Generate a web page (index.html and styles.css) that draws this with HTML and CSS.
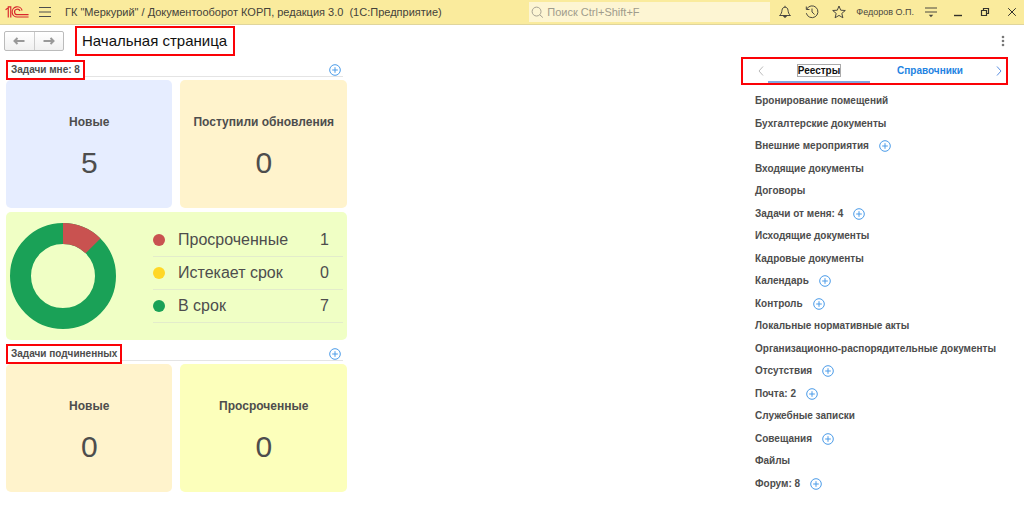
FILE: index.html
```html
<!DOCTYPE html>
<html lang="ru">
<head>
<meta charset="utf-8">
<meta name="viewport" content="width=device-width, initial-scale=1">
<title>Начальная страница</title>
<link rel="stylesheet" href="styles.css">
</head>
<body>
<svg class="defs" aria-hidden="true">
  <symbol id="plus" viewBox="0 0 12 12"><circle cx="6" cy="6" r="5.3"/><path d="M6 3.2v5.6M3.2 6h5.6"/></symbol>
</svg>
<header class="titlebar">
  <svg class="logo" viewBox="0 0 26 14" aria-label="1С">
    <g fill="none" stroke="#d8262c" stroke-width="1.2">
      <path d="M.6 4.600L3.400 2.600V12.600M3.400 4.200V1.600H6V12.600"/>
      <path d="M17.800 5.400A5.300 5.300 0 1 0 13 12.200H24.500"/>
      <path d="M15.600 6A2.900 2.900 0 1 0 13 9.800H24.500"/>
    </g>
  </svg>
  <button class="icon-btn menu" aria-label="Меню"><svg viewBox="0 0 12 12"><path d="M0 1.500h12M0 6h12M0 10.500h12"/></svg></button>
  <div class="app-title">ГК "Меркурий" / Документооборот КОРП, редакция 3.0&nbsp; (1С:Предприятие)</div>
  <label class="search">
    <svg viewBox="0 0 14 14"><circle cx="6" cy="6" r="4.8"/><path d="M9.500 9.500l3.300 3"/></svg>
    <input type="search" placeholder="Поиск Ctrl+Shift+F" aria-label="Поиск">
  </label>
  <div class="tools">
    <button class="icon-btn" aria-label="Уведомления"><svg viewBox="0 0 14 14"><path d="M1.500 10.500h11C10.600 9 10.300 7.400 10 5.200 9.800 3.300 8.700 2.200 7 2.200S4.200 3.300 4 5.200C3.700 7.400 3.400 9 1.500 10.500zM7 2.200V.8"/><path d="M5.600 11.500a1.500 1.200 0 0 0 2.800 0z" fill="currentColor"/></svg></button>
    <button class="icon-btn" aria-label="История"><svg viewBox="0 0 14 14"><path d="M1.800 4A5.900 5.900 0 1 1 1.300 8.200M1.300 1.500v3h3.200M7 3.500V7l2.600 2.500"/></svg></button>
    <button class="icon-btn" aria-label="Избранное"><svg viewBox="0 0 14 14"><path d="M7 1l1.700 4.200 4.600.3-3.500 2.900 1.100 4.400L7 10.400l-3.900 2.400 1.100-4.400L.7 5.500l4.600-.3z"/></svg></button>
    <button class="user">Федоров О.П.</button>
    <button class="icon-btn" aria-label="Настройки"><svg viewBox="0 0 14 14"><path d="M1 3h12M1 7h12"/><path d="M4.800 9.800h4.400L7 12.300z" fill="currentColor" stroke="none"/></svg></button>
    <button class="icon-btn win" aria-label="Свернуть"><svg viewBox="0 0 14 14"><path d="M3 10.500h8" stroke-width="1.400"/></svg></button>
    <button class="icon-btn win" aria-label="Развернуть"><svg viewBox="0 0 14 14"><path d="M3.500 5.500h5v5h-5zM5.500 5.500v-2h5v5h-2" stroke-width="1.200"/></svg></button>
    <button class="icon-btn win" aria-label="Закрыть"><svg viewBox="0 0 14 14"><path d="M3.200 3.200l7.600 7.600M10.800 3.200l-7.600 7.600"/></svg></button>
  </div>
</header>
<div class="pagebar">
  <div class="nav">
    <button aria-label="Назад"><svg viewBox="0 0 12 8"><path d="M11.500 4H1.500M4.500 1L1.500 4l3 3"/></svg></button>
    <button aria-label="Вперед"><svg viewBox="0 0 12 8"><path d="M.5 4h10M7.500 1l3 3-3 3"/></svg></button>
  </div>
  <h1 class="marked">Начальная страница</h1>
  <button class="more" aria-label="Ещё"><svg viewBox="0 0 4 12"><circle cx="2" cy="2" r="1.300"/><circle cx="2" cy="6" r="1.300"/><circle cx="2" cy="10" r="1.300"/></svg></button>
</div>
<div class="content">
  <main class="tasks">
    <section>
      <div class="section-head">
        <h2 class="marked">Задачи мне: 8</h2>
        <button class="add" aria-label="Добавить задачу"><svg><use href="#plus"/></svg></button>
      </div>
      <div class="cards">
        <article class="card blue"><h3>Новые</h3><p>5</p></article>
        <article class="card sand"><h3>Поступили обновления</h3><p>0</p></article>
      </div>
      <div class="summary">
        <svg class="donut" viewBox="0 0 106 106" aria-hidden="true">
          <circle cx="53" cy="53" r="42.500" stroke="#1aa157"/>
          <circle cx="53" cy="53" r="42.500" stroke="#c95250" pathLength="8" stroke-dasharray="1 7" transform="rotate(-90 53 53)"/>
        </svg>
        <ul class="legend">
          <li><span class="dot red"></span><span>Просроченные</span><b>1</b></li>
          <li><span class="dot yellow"></span><span>Истекает срок</span><b>0</b></li>
          <li><span class="dot green"></span><span>В срок</span><b>7</b></li>
        </ul>
      </div>
    </section>
    <section>
      <div class="section-head">
        <h2 class="marked">Задачи подчиненных</h2>
        <button class="add" aria-label="Добавить задачу"><svg><use href="#plus"/></svg></button>
      </div>
      <div class="cards">
        <article class="card sand"><h3>Новые</h3><p>0</p></article>
        <article class="card lemon"><h3>Просроченные</h3><p>0</p></article>
      </div>
    </section>
  </main>
  <aside class="registry">
    <div class="tabs marked" role="tablist">
      <button class="arrow prev" aria-label="Назад"><svg viewBox="0 0 6 10"><path d="M5 .5L1 5l4 4.500"/></svg></button>
      <button class="tab active" role="tab" aria-selected="true"><span>Реестры</span></button>
      <button class="tab" role="tab" aria-selected="false"><span>Справочники</span></button>
      <button class="arrow next" aria-label="Далее"><svg viewBox="0 0 6 10"><path d="M1 .5L5 5 1 9.500"/></svg></button>
    </div>
    <ul class="links">
      <li><a href="#">Бронирование помещений</a></li>
      <li><a href="#">Бухгалтерские документы</a></li>
      <li><a href="#">Внешние мероприятия</a><button class="add" aria-label="Добавить"><svg><use href="#plus"/></svg></button></li>
      <li><a href="#">Входящие документы</a></li>
      <li><a href="#">Договоры</a></li>
      <li><a href="#">Задачи от меня: 4</a><button class="add" aria-label="Добавить"><svg><use href="#plus"/></svg></button></li>
      <li><a href="#">Исходящие документы</a></li>
      <li><a href="#">Кадровые документы</a></li>
      <li><a href="#">Календарь</a><button class="add" aria-label="Добавить"><svg><use href="#plus"/></svg></button></li>
      <li><a href="#">Контроль</a><button class="add" aria-label="Добавить"><svg><use href="#plus"/></svg></button></li>
      <li><a href="#">Локальные нормативные акты</a></li>
      <li><a href="#">Организационно-распорядительные документы</a></li>
      <li><a href="#">Отсутствия</a><button class="add" aria-label="Добавить"><svg><use href="#plus"/></svg></button></li>
      <li><a href="#">Почта: 2</a><button class="add" aria-label="Добавить"><svg><use href="#plus"/></svg></button></li>
      <li><a href="#">Служебные записки</a></li>
      <li><a href="#">Совещания</a><button class="add" aria-label="Добавить"><svg><use href="#plus"/></svg></button></li>
      <li><a href="#">Файлы</a></li>
      <li><a href="#">Форум: 8</a><button class="add" aria-label="Добавить"><svg><use href="#plus"/></svg></button></li>
    </ul>
  </aside>
</div>
</body>
</html>
```
FILE: styles.css
```css
* { box-sizing: border-box; }
body { margin: 0; background: #fff; color: #4d4d4d; font: 10px/12px "Liberation Sans", Arial, sans-serif; }
h1, h2, h3, p, ul { margin: 0; padding: 0; }
ul { list-style: none; }
button { padding: 0; border: 0; background: none; color: inherit; font: inherit; cursor: pointer; }
svg { display: block; fill: none; stroke: currentColor; }
.defs { position: absolute; width: 0; height: 0; }
.marked { border: 2px solid #fb0207; }

.titlebar { display: flex; align-items: center; height: 25px; padding: 0 5px; background: #faeb9d; border-bottom: 1px solid #e0d59c; }
.logo { width: 25px; height: 14px; }
.icon-btn svg { width: 14px; height: 14px; }
.icon-btn.menu { margin: 0 14px 0 9px; }
.icon-btn.menu svg { width: 12px; height: 12px; }
.app-title { flex: 1; font-size: 11px; white-space: nowrap; color: #44423a; }
.search { display: flex; align-items: center; gap: 3px; width: 241px; height: 20px; padding: 0 2px; background: #fdf5d3; color: #a09c8c; }
.search svg { width: 13px; height: 13px; flex: none; }
.search input { flex: 1; min-width: 0; padding: 0; border: 0; outline: 0; background: none; font: 11px/14px "Liberation Sans", Arial, sans-serif; }
.search input::placeholder { color: #a09c8c; opacity: 1; }
.tools { display: flex; align-items: center; gap: 13px; padding-left: 8px; color: #4a4840; }
.user { margin: 0 -3px; font-size: 9px; white-space: nowrap; }
.win { color: #33322c; }

.pagebar { display: flex; align-items: center; height: 32px; padding: 0 19px 0 4px; }
.nav { display: flex; width: 60px; height: 20px; border: 1px solid #bbb; border-radius: 2px; background: linear-gradient(#fff, #f0f0f0); color: #999; }
.nav button { flex: 1; display: grid; place-items: center; }
.nav button + button { border-left: 1px solid #ccc; }
.nav svg { width: 12px; height: 8px; stroke-width: 2; }
h1 { margin-left: 11px; padding: 0 6px 0 5px; font: 15px/26px "Liberation Sans", Arial, sans-serif; color: #111; white-space: nowrap; }
.more { margin-left: auto; }
.more svg { width: 4px; height: 12px; fill: #777; stroke: none; }

.content { display: flex; justify-content: space-between; padding: 0 16px 0 6px; }
.tasks { width: 33.3vw; min-width: 320px; padding-top: 2px; }
.section-head { display: flex; align-items: center; justify-content: space-between; height: 21px; padding-right: 6px; background: linear-gradient(#e4e4e4, #e4e4e4) 0 17px / calc(100% - 4px) 1px no-repeat; }
h2 { padding: 0 3px; background: #fff; font: bold 10px/16px "Liberation Sans", Arial, sans-serif; white-space: nowrap; }
section + section { margin-top: 3px; }
.add { display: block; color: #4a9be8; }
.add svg { width: 12px; height: 12px; stroke-width: 1; }
.cards { display: grid; grid-template-columns: 1fr 1fr; gap: 8px; }
.card { display: flex; flex-direction: column; align-items: center; gap: 12px; height: 128px; padding-top: 34px; border-radius: 5px; }
.card h3 { font: bold 12px/16px "Liberation Sans", Arial, sans-serif; white-space: nowrap; }
.card p { font-size: 30px; line-height: 42px; }
.blue { background: #e6edff; }
.sand { background: #fff3cc; }
.lemon { background: #fcffbb; }
.summary { display: flex; align-items: center; justify-content: space-between; height: 128px; margin-top: 4px; padding: 0 4px; border-radius: 5px; background: #f0ffc5; }
.donut { width: 106px; height: 106px; }
.donut circle { stroke-width: 21; }
.legend { width: 190px; padding-bottom: 6px; font-size: 16px; }
.legend li { display: flex; align-items: center; height: 33px; padding-right: 14px; border-bottom: 1px solid #e3eccb; }
.legend b { margin-left: auto; font-weight: normal; }
.dot { width: 12px; height: 12px; margin-right: 13px; border-radius: 50%; }
.red { background: #c95250; }
.yellow { background: #ffd726; }
.green { background: #1aa157; }

.registry { display: flex; flex-direction: column; width: 267px; margin-bottom: -3px; }
.tabs { display: flex; height: 28px; padding: 0 1px 0 11px; }
.tab { flex: 1 1 0; color: #2383e2; font-weight: bold; }
.tab + .tab { margin-left: 9px; }
.tab.active { color: #111; border-bottom: 2px solid #82a9e0; padding-top: 1px; }
.tab.active span { outline: 1px solid #aaa; }
.arrow { display: grid; place-items: center; }
.arrow svg { width: 6px; height: 10px; }
.prev { width: 14px; color: #bbb; }
.next { width: 12px; margin-left: 12px; color: #5b8fe0; }
.links { flex: 1; display: grid; grid-auto-rows: 1fr; margin-top: 5px; padding-left: 14px; }
.links li { display: flex; align-items: center; gap: 10px; }
.links a { color: inherit; font-weight: bold; text-decoration: none; white-space: nowrap; }
```
